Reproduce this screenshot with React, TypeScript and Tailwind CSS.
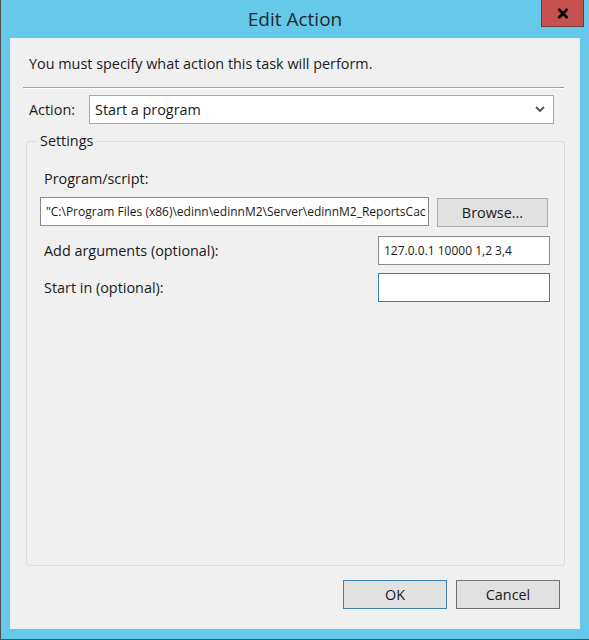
import React from "react";

const font = { fontFamily: '"Open Sans", "Noto Sans", sans-serif' };

export default function App() {
  return (
    <div
      className="w-[589px] h-[640px] bg-[#66C9EA] border-l border-b border-[#505050] flex flex-col text-[#1a1a1a]"
      style={font}
    >
      {/* Title bar */}
      <div className="h-[38px] flex items-start relative">
        <div className="flex-1 flex justify-center pt-[5px] text-[19px] leading-[28px] text-[#1e2a30]">
          Edit Action
        </div>
        <div className="absolute left-[540px] top-0 w-[43px] h-[27px] bg-[#C75050] border border-[#6b3a3a] border-t-0 flex items-center justify-center">
          <svg width="12" height="11" viewBox="0 0 12 11">
            <path d="M1.5 1 L10.5 10 M10.5 1 L1.5 10" stroke="#000" strokeWidth="2.6" />
          </svg>
        </div>
      </div>

      {/* Content */}
      <div className="ml-[9px] mr-[9px] h-[591px] bg-[#F0F0F0] border border-[#e4eef4] flex flex-col">
        <div className="pl-[18px] pt-[14px] text-[14.4px] leading-[22px]">
          You must specify what action this task will perform.
        </div>
        <div className="ml-[12px] mr-[15px] mt-[12px] h-[2px] border-t border-[#a0a0a0] border-b border-b-white" />

        <div className="flex items-center mt-[6px] ml-[18px]">
          <div className="w-[60px] text-[14.4px]">Action:</div>
          <div className="w-[465px] h-[29px] bg-white border border-[#a9a9a9] flex items-center pl-[5px] pr-[8px]">
            <span className="flex-1 text-[14.4px]">Start a program</span>
            <svg width="10" height="7" viewBox="0 0 10 7">
              <path d="M1 1 L5 5 L9 1" stroke="#505050" strokeWidth="1.8" fill="none" />
            </svg>
          </div>
        </div>

        <fieldset className="ml-[15px] mr-[14px] mt-[8px] h-[434px] border border-[#dcdcdc] rounded-[3px] px-[13px] pb-0 pt-0 min-w-0">
          <legend className="ml-[-3px] px-[3px] text-[14.4px] leading-[18px]">Settings</legend>
          <div className="pl-[4px] pt-[19px] text-[14.4px] leading-[20px]">Program/script:</div>
          <div className="flex items-center mt-[7px] gap-[8px]">
            <div className="w-[389px] h-[29px] bg-white border border-[#8a8a8a] flex items-center pl-[5px] overflow-hidden whitespace-nowrap text-[12px]">
              "C:\Program Files (x86)\edinn\edinnM2\Server\edinnM2_ReportsCac
            </div>
            <button className="w-[111px] h-[29px] mt-[2px] bg-[#E1E1E1] border border-[#adadad] text-[14.4px] flex items-center justify-center">
              Browse...
            </button>
          </div>
          <div className="flex items-center mt-[9px]">
            <div className="flex-1 pl-[4px] text-[14.4px]">Add arguments (optional):</div>
            <div className="w-[172px] h-[29px] mr-[1px] bg-white border border-[#8a8a8a] flex items-center pl-[5px] text-[12px]">
              127.0.0.1 10000 1,2 3,4
            </div>
          </div>
          <div className="flex items-center mt-[8px]">
            <div className="flex-1 pl-[4px] text-[14.4px]">Start in (optional):</div>
            <div className="w-[172px] h-[29px] mr-[1px] bg-white border border-[#3c7fb1]" />
          </div>
        </fieldset>

        <div className="flex justify-end gap-[9px] mt-[14px] mr-[19px]">
          <button className="w-[104px] h-[29px] bg-[#E1E1E1] border border-[#3c7fb1] text-[14.4px] flex items-center justify-center">
            OK
          </button>
          <button className="w-[104px] h-[29px] bg-[#E1E1E1] border border-[#707070] text-[14.4px] flex items-center justify-center">
            Cancel
          </button>
        </div>
      </div>
    </div>
  );
}
